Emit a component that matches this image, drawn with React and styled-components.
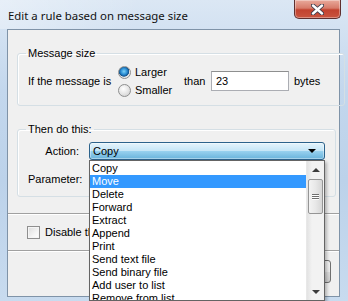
import React from 'react';
import styled, { createGlobalStyle } from "styled-components";

const actions = [
    "Copy", "Move", "Delete", "Forward", "Extract", "Append", "Print",
    "Send text file", "Send binary file", "Add user to list", "Remove from list"
];

const App = () => {
    return (
        <>
            <GlobalStyle />
            <Window>
                <TitleBar>
                    <Title>Edit a rule based on message size</Title>
                    <CloseButton>
                        <svg width="13" height="11" viewBox="0 0 13 11">
                            <path d="M2 1.5 L11 9.5 M11 1.5 L2 9.5" stroke="#3b3b4a" strokeWidth="4.2" strokeLinecap="round" />
                            <path d="M2 1.5 L11 9.5 M11 1.5 L2 9.5" stroke="#ffffff" strokeWidth="2.4" strokeLinecap="round" />
                        </svg>
                    </CloseButton>
                </TitleBar>
                <Client>
                    <GroupBox $mt={17} $pt={3} $pb={6}>
                        <Legend>Message size</Legend>
                        <SizeRow>
                            <Label $width={90}>If the message is</Label>
                            <RadioStack>
                                <RadioRow><RadioDot $checked />Larger</RadioRow>
                                <RadioRow><RadioDot />Smaller</RadioRow>
                            </RadioStack>
                            <Label $width={27}>than</Label>
                            <TextBox $width={78} defaultValue="23" />
                            <Label $width={40} style={{ marginLeft: 5 }}>bytes</Label>
                        </SizeRow>
                    </GroupBox>
                    <GroupBox $mt={17} $pt={6} $pb={8}>
                        <Legend>Then do this:</Legend>
                        <FormRow>
                            <Label $width={51} $right>Action:</Label>
                            <ComboWrap>
                                <Combo>
                                    Copy
                                    <ComboArrow />
                                </Combo>
                                <DropList>
                                    <ListItems>
                                        {actions.map((a, i) => (
                                            <ListItem key={a} $active={i === 1}>{a}</ListItem>
                                        ))}
                                    </ListItems>
                                    <ScrollBar>
                                        <ScrollButton><ArrowUp /></ScrollButton>
                                        <Track>
                                            <Thumb>
                                                <Grip /><Grip /><Grip />
                                            </Thumb>
                                        </Track>
                                        <ScrollButton><ArrowDown /></ScrollButton>
                                    </ScrollBar>
                                </DropList>
                            </ComboWrap>
                        </FormRow>
                        <FormRow $mt={10}>
                            <Label $width={51} $right>Parameter:</Label>
                            <TextBox $width={236} />
                        </FormRow>
                    </GroupBox>
                    <Separator $mt={16} />
                    <CheckRow>
                        <CheckBox />
                        Disable this rule
                    </CheckRow>
                    <Separator />
                    <ButtonRow>
                        <Button>OK</Button>
                        <Button>Cancel</Button>
                    </ButtonRow>
                </Client>
            </Window>
        </>
    )
}

const GlobalStyle = createGlobalStyle`
    body {
        margin: 0;
        overflow: hidden;
        font-family: "Liberation Sans", Arial, sans-serif;
        font-size: 11px;
        color: #000;
    }
`

const Window = styled.div`
    width: 348px;
    height: 301px;
    display: flex;
    flex-direction: column;
    box-sizing: border-box;
    background: linear-gradient(180deg, #dbe7f4 0%, #c3d7ed 30%, #bcd2ea 60%, #c8dbef 100%);
`

const TitleBar = styled.div`
    height: 29px;
    flex-shrink: 0;
    display: flex;
    align-items: center;
    justify-content: space-between;
    padding-left: 8px;
    background: linear-gradient(100deg, rgba(255,255,255,0.35) 0%, rgba(255,255,255,0) 40%);
`

const Title = styled.div`
    font-family: "Noto Sans", "Open Sans", sans-serif;
    font-size: 11.4px;
    color: #111;
    margin-top: 1px;
`

const CloseButton = styled.div`
    align-self: flex-start;
    width: 47px;
    height: 19px;
    margin-right: 7px;
    box-sizing: border-box;
    border: 1px solid #5e2f2f;
    border-top: none;
    border-radius: 0 0 5px 5px;
    background: linear-gradient(180deg, #e9aa9c 0%, #d77b6a 45%, #c2422f 55%, #c9543f 100%);
    box-shadow: inset 0 0 0 1px rgba(255,255,255,0.35);
    display: flex;
    align-items: center;
    justify-content: center;
`

const Client = styled.div`
    flex: 1;
    margin: 0 8px 4px 7px;
    border: 1px solid #7f93a8;
    background: #f0f0f0;
    display: flex;
    flex-direction: column;
    box-sizing: border-box;
`

const GroupBox = styled.fieldset`
    width: 316px;
    box-sizing: border-box;
    margin: ${p => p.$mt}px 0 0 9px;
    padding: ${p => p.$pt}px 10px ${p => p.$pb}px 10px;
    border: 1px solid #d5dfe5;
    border-radius: 3px;
    box-shadow: inset 1px 1px 0 #fff;
`

const Legend = styled.legend`
    padding: 0 2px;
    margin-left: -2px;
    line-height: 13px;
    font-size: 11px;
`

const SizeRow = styled.div`
    display: flex;
    align-items: center;
`

const Label = styled.div`
    width: ${p => p.$width}px;
    flex-shrink: 0;
    text-align: ${p => p.$right ? "right" : "left"};
    white-space: nowrap;
`

const RadioStack = styled.div`
    width: 66px;
    display: flex;
    flex-direction: column;
`

const RadioRow = styled.div`
    height: 18px;
    display: flex;
    align-items: center;
    gap: 4px;
`

const RadioDot = styled.span`
    width: 13px;
    height: 13px;
    box-sizing: border-box;
    border-radius: 50%;
    border: 1px solid #8e8f8f;
    background: ${p => p.$checked
        ? "radial-gradient(circle at 45% 40%, #7fd3f7 0%, #2a8dd4 35%, #14538a 55%, #e6e6e6 62%, #f4f4f4 100%)"
        : "radial-gradient(circle at 40% 35%, #ffffff 0%, #e6e6e6 50%, #c9c9c9 100%)"};
`

const TextBox = styled.input`
    width: ${p => p.$width}px;
    height: 20px;
    box-sizing: border-box;
    border: 1px solid #abadb3;
    border-top-color: #8e8f8f;
    padding: 0 4px;
    font-family: inherit;
    font-size: 11px;
    background: #fff;
    outline: none;
`

const FormRow = styled.div`
    display: flex;
    align-items: center;
    gap: 10px;
    margin-top: ${p => p.$mt || 0}px;
    height: 18px;
`

const ComboWrap = styled.div`
    position: relative;
    width: 236px;
    height: 18px;
`

const Combo = styled.div`
    height: 18px;
    box-sizing: border-box;
    border: 1px solid #2c628b;
    border-radius: 3px;
    padding-left: 3px;
    display: flex;
    align-items: center;
    justify-content: space-between;
    background: linear-gradient(180deg, #e5f4fc 0%, #c4e5f6 50%, #98d1ef 51%, #68b3db 100%);
    box-shadow: inset 0 0 0 1px rgba(255,255,255,0.4);
`

const ComboArrow = styled.span`
    width: 0;
    height: 0;
    margin-right: 8px;
    border-left: 4px solid transparent;
    border-right: 4px solid transparent;
    border-top: 4px solid #000;
`

const DropList = styled.div`
    position: absolute;
    z-index: 10;
    top: 18px;
    left: 0;
    width: 236px;
    height: 141px;
    box-sizing: border-box;
    border: 1px solid #646464;
    background: #fff;
    display: flex;
    box-shadow: 2px 2px 3px rgba(0,0,0,0.25);
`

const ListItems = styled.div`
    flex: 1;
    overflow: hidden;
    padding-top: 1px;
`

const ListItem = styled.div`
    height: 13px;
    line-height: 13px;
    padding-left: 2px;
    white-space: nowrap;
    background: ${p => p.$active ? "#3399ff" : "transparent"};
    color: ${p => p.$active ? "#fff" : "#000"};
`

const ScrollBar = styled.div`
    width: 17px;
    display: flex;
    flex-direction: column;
    background: linear-gradient(90deg, #e3e3e3 0%, #f2f2f2 30%, #f2f2f2 100%);
    border-left: 1px solid #e8e8e8;
`

const ScrollButton = styled.div`
    height: 17px;
    display: flex;
    align-items: center;
    justify-content: center;
`

const ArrowUp = styled.span`
    width: 0;
    height: 0;
    border-left: 4px solid transparent;
    border-right: 4px solid transparent;
    border-bottom: 4px solid #3c3c3c;
`

const ArrowDown = styled(ArrowUp)`
    border-bottom: none;
    border-top: 4px solid #3c3c3c;
`

const Track = styled.div`
    flex: 1;
`

const Thumb = styled.div`
    margin: 1px 1px 0 1px;
    height: 35px;
    box-sizing: border-box;
    border: 1px solid #959595;
    border-radius: 2px;
    background: linear-gradient(90deg, #f3f3f3 0%, #e8e8e8 50%, #d6d6d6 100%);
    display: flex;
    flex-direction: column;
    align-items: center;
    justify-content: center;
    gap: 1px;
`

const Grip = styled.span`
    width: 7px;
    height: 1px;
    background: #6f6f6f;
    box-shadow: 0 1px 0 #fff;
`

const Separator = styled.div`
    margin-top: ${p => p.$mt || 0}px;
    height: 1px;
    background: #a0a0a0;
    box-shadow: 0 1px 0 #fff;
`

const CheckRow = styled.div`
    height: 36px;
    display: flex;
    align-items: center;
    gap: 5px;
    padding-left: 19px;
`

const CheckBox = styled.span`
    width: 13px;
    height: 13px;
    box-sizing: border-box;
    border: 1px solid #8f8f8f;
    background: linear-gradient(135deg, #dcdcdc 0%, #f4f4f4 60%, #ffffff 100%);
    box-shadow: inset 0 0 0 1px #f5f5f5;
`

const ButtonRow = styled.div`
    display: flex;
    justify-content: flex-end;
    gap: 6px;
    padding: 9px 8px 0 0;
`

const Button = styled.div`
    width: 75px;
    height: 23px;
    box-sizing: border-box;
    border: 1px solid #707070;
    border-radius: 3px;
    background: linear-gradient(180deg, #f2f2f2 0%, #ebebeb 50%, #dddddd 51%, #cfcfcf 100%);
    display: flex;
    align-items: center;
    justify-content: center;
`

export default App;
